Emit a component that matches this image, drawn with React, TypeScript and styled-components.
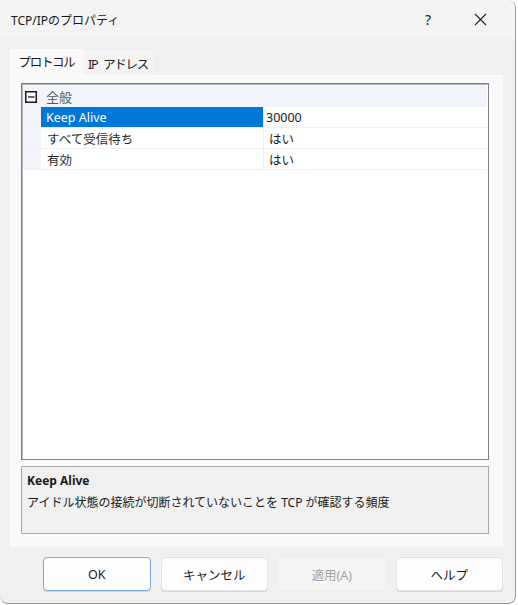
import React from "react";
import styled, { createGlobalStyle } from "styled-components";

const Global = createGlobalStyle`
  html, body { margin: 0; padding: 0; background: #ffffff; }
  body { font-family: "Noto Sans", "Noto Sans CJK JP", sans-serif; }
  * { box-sizing: border-box; }
`;

const FONT = `"Noto Sans", "Noto Sans CJK JP", sans-serif`;

const Window = styled.div`
  width: 516px;
  height: 604px;
  background: #f0f0f0;
  border-right: 1px solid #9a9a9a;
  border-bottom: 1px solid #9a9a9a;
  border-radius: 0 8px 8px 8px;
  display: flex;
  flex-direction: column;
  overflow: hidden;
  font-family: ${FONT};
  color: #1a1a1a;
`;

const TitleBar = styled.div`
  height: 38px;
  flex: none;
  display: flex;
  align-items: center;
  padding-left: 11px;
  background: #f3f3f3;
  font-size: 12px;
`;

const Title = styled.div`
  flex: 1;
  padding-top: 1px;
`;

const TitleButton = styled.div<{ $w: number }>`
  width: ${(p) => p.$w}px;
  height: 38px;
  display: flex;
  align-items: center;
  justify-content: center;
  font-size: 14px;
  color: #222;
`;

const Body = styled.div`
  flex: 1;
  display: flex;
  flex-direction: column;
  padding: 11px 12px 0 10px;
`;

const TabStrip = styled.div`
  display: flex;
  align-items: flex-end;
  height: 26px;
`;

const Tab = styled.div<{ $active?: boolean }>`
  width: ${(p) => (p.$active ? 73 : 70)}px;
  height: ${(p) => (p.$active ? 26 : 24)}px;
  background: ${(p) => (p.$active ? "#f9f9f9" : "#f3f3f3")};
  border: 1px solid ${(p) => (p.$active ? "#fbfbfb" : "#f6f6f6")};
  border-bottom: none;
  display: flex;
  align-items: center;
  justify-content: center;
  font-size: 12.5px;
  letter-spacing: -1.3px;
  word-spacing: 4px;
  color: #1a1a1a;
  padding-bottom: ${(p) => (p.$active ? 2 : 0)}px;
`;

const Panel = styled.div`
  height: 471px;
  background: #f9f9f9;
  border: 1px solid #fcfcfc;
  padding: 7px 13px 0 10px;
  display: flex;
  flex-direction: column;
`;

const Grid = styled.div`
  height: 377px;
  background: #ffffff;
  border: 1px solid #7f7f7f;
  box-shadow: inset 1px 1px 0 #b8b8b8;
  display: flex;
  flex-direction: column;
  padding: 1px 1px 0 1px;
`;

const CategoryRow = styled.div`
  height: 22px;
  display: flex;
  align-items: center;
  background: #f1f5fb;
  font-size: 13px;
  color: #555;
`;

const CategoryLabel = styled.span`
  margin-left: 5px;
`;

const Toggle = styled.div`
  width: 18px;
  height: 22px;
  display: flex;
  align-items: center;
  justify-content: center;
  padding-right: 3px;
  padding-top: 1px;
`;

const Row = styled.div`
  height: 21px;
  display: grid;
  grid-template-columns: 18px 223px 1fr;
  border-bottom: 1px solid #f0f0f0;
  font-size: 12.5px;
`;

const Gutter = styled.div`
  background: #f1f5fb;
`;

const NameCell = styled.div<{ $selected?: boolean }>`
  background: ${(p) => (p.$selected ? "#0078d7" : "#ffffff")};
  color: ${(p) => (p.$selected ? "#ffffff" : "#2b2b2b")};
  padding-left: ${(p) => (p.$selected ? 5 : 6)}px;
  display: flex;
  align-items: center;
  border-right: 1px solid #f0f0f0;
`;

const ValueCell = styled.div<{ $pad: number }>`
  padding-left: ${(p) => p.$pad}px;
  display: flex;
  align-items: center;
  color: #1a1a1a;
`;

const Filler = styled.div`
  flex: 1;
  background: #ffffff;
`;

const Desc = styled.div`
  margin-top: 6px;
  height: 68px;
  border: 1px solid #a9a9a9;
  background: #f0f0f0;
  padding: 4px 5px;
  font-size: 12px;
  color: #1a1a1a;
`;

const DescTitle = styled.div`
  font-weight: bold;
  height: 19px;
  line-height: 19px;
`;

const DescText = styled.div`
  margin-top: 3px;
  line-height: 19px;
`;

const ButtonBar = styled.div`
  display: flex;
  gap: 10px;
  padding: 11px 0 0 33px;
`;

const Button = styled.div<{ $variant?: "default" | "disabled" }>`
  width: 108px;
  height: 34px;
  border-radius: 4px;
  display: flex;
  align-items: center;
  justify-content: center;
  font-size: 12.5px;
  background: ${(p) => (p.$variant === "disabled" ? "#f5f5f5" : "#fdfdfd")};
  color: ${(p) => (p.$variant === "disabled" ? "#a2a2a2" : "#1a1a1a")};
  border: 1px solid
    ${(p) =>
      p.$variant === "default"
        ? "#79a9dc"
        : p.$variant === "disabled"
        ? "#efefef"
        : "#e3e3e3"};
  box-shadow: ${(p) =>
    p.$variant === "disabled" ? "none" : "0 1px 0 #d6d6d6"};
`;

const MinusBox = () => (
  <svg width="12" height="12" viewBox="0 0 12 12">
    <rect x="0.75" y="0.75" width="10.5" height="10.5" fill="#fff" stroke="#1a1a1a" strokeWidth="1.5" />
    <line x1="3" y1="6" x2="9.5" y2="6" stroke="#1a1a1a" strokeWidth="1.3" />
  </svg>
);

const CloseIcon = () => (
  <svg width="13" height="13" viewBox="0 0 13 13">
    <path d="M1 1 L12 12 M12 1 L1 12" stroke="#222" strokeWidth="1.1" />
  </svg>
);

const rows = [
  { name: "Keep Alive", value: "30000", selected: true, pad: 2 },
  { name: "すべて受信待ち", value: "はい", pad: 5 },
  { name: "有効", value: "はい", pad: 5 },
];

export default function App() {
  return (
    <>
      <Global />
      <Window>
        <TitleBar>
          <Title>TCP/IPのプロパティ</Title>
          <TitleButton $w={34}>?</TitleButton>
          <TitleButton $w={70}>
            <CloseIcon />
          </TitleButton>
        </TitleBar>
        <Body>
          <TabStrip>
            <Tab $active>プロトコル</Tab>
            <Tab>IP アドレス</Tab>
          </TabStrip>
          <Panel>
            <Grid>
              <CategoryRow>
                <Toggle>
                  <MinusBox />
                </Toggle>
                <CategoryLabel>全般</CategoryLabel>
              </CategoryRow>
              {rows.map((r) => (
                <Row key={r.name}>
                  <Gutter />
                  <NameCell $selected={r.selected}>{r.name}</NameCell>
                  <ValueCell $pad={r.pad}>{r.value}</ValueCell>
                </Row>
              ))}
              <Filler />
            </Grid>
            <Desc>
              <DescTitle>Keep Alive</DescTitle>
              <DescText>アイドル状態の接続が切断されていないことを TCP が確認する頻度</DescText>
            </Desc>
          </Panel>
          <ButtonBar>
            <Button $variant="default">OK</Button>
            <Button>キャンセル</Button>
            <Button $variant="disabled">適用(A)</Button>
            <Button>ヘルプ</Button>
          </ButtonBar>
        </Body>
      </Window>
    </>
  );
}
